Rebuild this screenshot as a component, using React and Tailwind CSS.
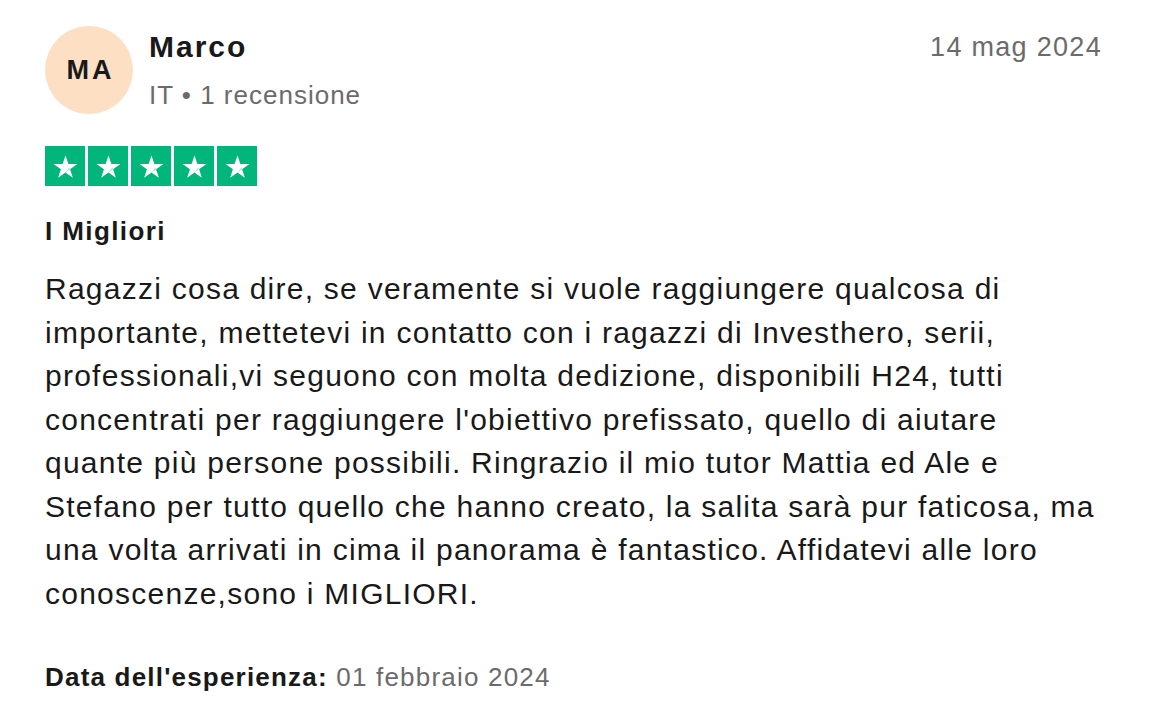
import React from "react";

const Star = () => (
  <div className="w-[40px] h-[40px] bg-[#00b67a] flex items-center justify-center">
    <svg width="27" height="27" viewBox="0 0 24 24">
      <path d="M12 2.2l2.55 7.6h8.0l-6.47 4.7 2.47 7.6L12 17.4l-6.55 4.7 2.47-7.6L1.45 9.8h8.0z" fill="#ffffff" />
      <path d="M12 17.4l3.95-2.85-0.6-1.8z" fill="#00b67a" opacity="0.35" />
    </svg>
  </div>
);

const lines = [
  "Ragazzi cosa dire, se veramente si vuole raggiungere qualcosa di",
  "importante, mettetevi in contatto con i ragazzi di Investhero, serii,",
  "professionali,vi seguono con molta dedizione, disponibili H24, tutti",
  "concentrati per raggiungere l'obiettivo prefissato, quello di aiutare",
  "quante più persone possibili. Ringrazio il mio tutor Mattia ed Ale e",
  "Stefano per tutto quello che hanno creato, la salita sarà pur faticosa, ma",
  "una volta arrivati in cima il panorama è fantastico. Affidatevi alle loro",
  "conoscenze,sono i MIGLIORI.",
];

export default function App() {
  return (
    <div className="w-[1164px] h-[722px] bg-white text-[#191919] pl-[45px] pr-[62px] pt-[26px] flex flex-col" style={{ fontFamily: '"Liberation Sans", Arial, Helvetica, sans-serif' }}>
      <div className="flex justify-between items-start">
        <div className="flex items-start">
          <div className="w-[88px] h-[88px] rounded-full bg-[#fde0c4] flex items-center justify-center text-[27px] font-bold tracking-[3px] pl-[3px]">MA</div>
          <div className="ml-[16px] pt-[3px] flex flex-col">
            <div className="text-[30px] leading-[36px] font-bold tracking-[2px]">Marco</div>
            <div className="mt-[14px] text-[26px] leading-[32px] text-[#6b6b6b] tracking-[1px]">IT • 1 recensione</div>
          </div>
        </div>
        <div className="pt-[5px] text-[27px] leading-[32px] text-[#6b6b6b] tracking-[1.3px]">14 mag 2024</div>
      </div>
      <div className="mt-[32px] flex gap-[3px]">
        <Star /><Star /><Star /><Star /><Star />
      </div>
      <div className="mt-[29px] text-[26px] leading-[32px] font-bold tracking-[1.4px]">I Migliori</div>
      <p className="mt-[20px] w-[1100px] text-[30px] leading-[43.5px] tracking-[1.25px] whitespace-nowrap">
        {lines.map((l, i) => (
          <React.Fragment key={i}>
            {l}
            {i < lines.length - 1 && <br />}
          </React.Fragment>
        ))}
      </p>
      <div className="mt-[46px] text-[26px] leading-[32px] tracking-[1.2px]">
        <span className="font-bold">Data dell'esperienza:</span>{" "}
        <span className="text-[#6b6b6b]">01 febbraio 2024</span>
      </div>
    </div>
  );
}
